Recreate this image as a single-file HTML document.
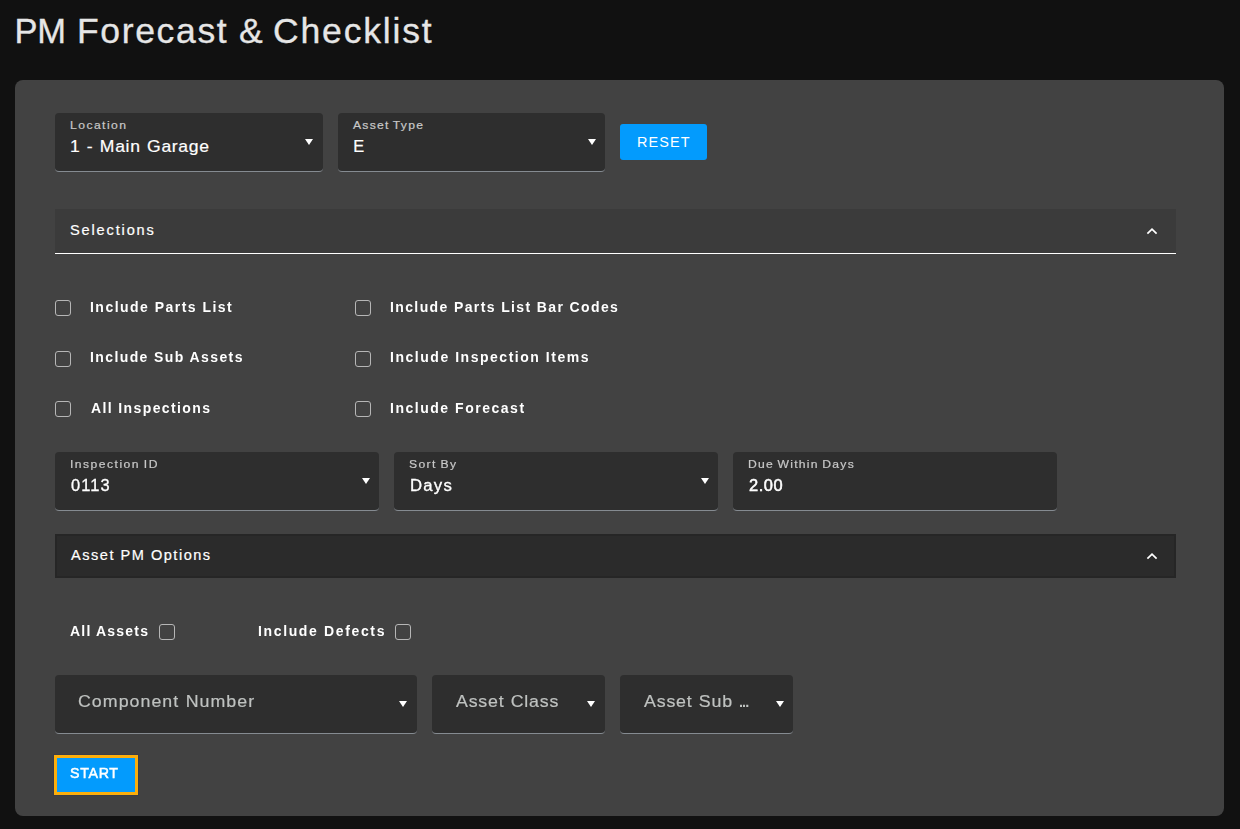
<!DOCTYPE html>
<html lang="en">
<head>
<meta charset="utf-8">
<title>PM Forecast &amp; Checklist</title>
<style>
*{box-sizing:border-box;margin:0;padding:0}
html,body{width:1240px;height:829px;overflow:hidden;background:#111111}
body{font-family:"Liberation Sans",sans-serif;color:#fff;position:relative}
.tx{position:absolute;display:inline-block;white-space:nowrap;line-height:1;transform-origin:0 50%}
h1{font-weight:400;font-size:34.5px}
.card{position:absolute;left:15px;top:80px;width:1209px;height:736px;background:#424242;border-radius:8px}
.field{position:absolute;height:59px;background:#2e2e2e;border-radius:4px;border-bottom:1px solid #858b91}
.arr{position:absolute;width:0;height:0;border-left:4.5px solid transparent;border-right:4.5px solid transparent;border-top:6.5px solid #fff}
.btn{position:absolute;background:#039bfd;border:0;font:inherit;color:#fff}
.sec{position:absolute;left:40px;width:1121px}
.chev{position:absolute}
.cb{position:absolute;width:16px;height:16px;border:1px solid #b6b6b6;border-radius:3px}
</style>
</head>
<body>
<h1><span class="tx" style="left:14.44px;top:13.70px;font-size:34.5px;color:#e6e6e6;letter-spacing:-0.27px;-webkit-text-stroke:0.3px #e6e6e6;">PM</span> <span class="tx" style="left:76.56px;top:13.70px;font-size:34.5px;color:#e6e6e6;letter-spacing:1.59px;transform:scaleX(1.03);-webkit-text-stroke:0.3px #e6e6e6;">Forecast</span> <span class="tx" style="left:238.83px;top:13.70px;font-size:34.5px;color:#e6e6e6;transform:scaleX(1.03);-webkit-text-stroke:0.3px #e6e6e6;">&amp;</span> <span class="tx" style="left:273.22px;top:13.70px;font-size:34.5px;color:#e6e6e6;letter-spacing:1.77px;transform:scaleX(1.03);-webkit-text-stroke:0.3px #e6e6e6;">Checklist</span></h1>
<main class="card">
<div class="field" style="left:40px;top:33px;width:268px"><span class="tx" style="left:15.13px;top:7.48px;font-size:11.25px;color:#c8c8c8;letter-spacing:1.33px;transform:scaleX(1.08);-webkit-text-stroke:0.2px #c8c8c8;">Location</span><span class="tx" style="left:14.57px;top:24.52px;font-size:16.4px;color:#ffffff;letter-spacing:0.65px;word-spacing:0.8px;transform:scaleX(1.07);-webkit-text-stroke:0.2px #ffffff;">1 - Main Garage</span><i class="arr" style="left:249.5px;top:25.7px"></i></div>
<div class="field" style="left:323px;top:33px;width:267px"><span class="tx" style="left:14.60px;top:7.48px;font-size:11.25px;color:#c8c8c8;letter-spacing:1.14px;word-spacing:-1.0px;transform:scaleX(1.08);-webkit-text-stroke:0.2px #c8c8c8;">Asset Type</span><span class="tx" style="left:15.19px;top:24.52px;font-size:16.4px;color:#ffffff;-webkit-text-stroke:0.2px #ffffff;">E</span><i class="arr" style="left:249.5px;top:25.7px"></i></div>
<button class="btn" style="left:605px;top:44px;width:87px;height:36px;border-radius:3px"><span class="tx" style="left:16.65px;top:11.25px;font-size:14.0px;color:#ffffff;letter-spacing:1.09px;transform:scaleX(1.03);">RESET</span></button>

<div class="sec" style="top:129px;height:45px;background:#3b3b3b;border-bottom:1px solid #fff"><span class="tx" style="left:15.42px;top:14.15px;font-size:14.0px;color:#ffffff;letter-spacing:1.78px;transform:scaleX(1.04);-webkit-text-stroke:0.2px #ffffff;">Selections</span><svg class="chev" style="left:1090px;top:17px" width="14" height="10" viewBox="0 0 14 10"><path d="M2.4 7.7 L7 3.1 L11.6 7.7" fill="none" stroke="#ffffff" stroke-width="1.7"/></svg></div>
<label><i class="cb" style="left:40px;top:220px"></i><span class="tx" style="left:75.26px;top:220.25px;font-size:14.0px;font-weight:700;color:#ffffff;letter-spacing:1.47px;will-change:transform;">Include Parts List</span></label>
<label><i class="cb" style="left:340px;top:220px"></i><span class="tx" style="left:375.26px;top:220.25px;font-size:14.0px;font-weight:700;color:#ffffff;letter-spacing:1.38px;will-change:transform;">Include Parts List Bar Codes</span></label>
<label><i class="cb" style="left:40px;top:271px"></i><span class="tx" style="left:75.26px;top:270.15px;font-size:14.0px;font-weight:700;color:#ffffff;letter-spacing:1.40px;will-change:transform;">Include Sub Assets</span></label>
<label><i class="cb" style="left:340px;top:271px"></i><span class="tx" style="left:375.26px;top:270.15px;font-size:14.0px;font-weight:700;color:#ffffff;letter-spacing:1.53px;will-change:transform;">Include Inspection Items</span></label>
<label><i class="cb" style="left:40px;top:321px"></i><span class="tx" style="left:75.82px;top:321.15px;font-size:14.0px;font-weight:700;color:#ffffff;letter-spacing:1.39px;will-change:transform;">All Inspections</span></label>
<label><i class="cb" style="left:340px;top:321px"></i><span class="tx" style="left:375.26px;top:321.15px;font-size:14.0px;font-weight:700;color:#ffffff;letter-spacing:1.52px;will-change:transform;">Include Forecast</span></label>

<div class="field" style="left:40px;top:372px;width:324px"><span class="tx" style="left:14.71px;top:7.48px;font-size:11.25px;color:#c8c8c8;letter-spacing:1.36px;word-spacing:-1.0px;transform:scaleX(1.08);-webkit-text-stroke:0.2px #c8c8c8;will-change:transform;">Inspection ID</span><span class="tx" style="left:16.11px;top:26.03px;font-size:15.8px;color:#ffffff;letter-spacing:1.04px;transform:scaleX(1.04);-webkit-text-stroke:0.3px #ffffff;will-change:transform;">0113</span><i class="arr" style="left:306.5px;top:25.8px"></i></div>
<div class="field" style="left:379px;top:372px;width:324px"><span class="tx" style="left:15.31px;top:7.48px;font-size:11.25px;color:#c8c8c8;letter-spacing:1.27px;word-spacing:-1.0px;transform:scaleX(1.08);-webkit-text-stroke:0.2px #c8c8c8;will-change:transform;">Sort By</span><span class="tx" style="left:15.86px;top:26.03px;font-size:15.8px;color:#ffffff;letter-spacing:1.16px;transform:scaleX(1.06);-webkit-text-stroke:0.3px #ffffff;will-change:transform;">Days</span><i class="arr" style="left:306.5px;top:25.8px"></i></div>
<div class="field" style="left:718px;top:372px;width:324px"><span class="tx" style="left:15.03px;top:7.48px;font-size:11.25px;color:#c8c8c8;letter-spacing:1.15px;word-spacing:-1.0px;transform:scaleX(1.08);-webkit-text-stroke:0.2px #c8c8c8;will-change:transform;">Due Within Days</span><span class="tx" style="left:15.58px;top:26.03px;font-size:15.8px;color:#ffffff;letter-spacing:0.56px;transform:scaleX(1.04);-webkit-text-stroke:0.5px #ffffff;will-change:transform;">2.00</span></div>

<div class="sec" style="top:454px;height:44px;background:#2b2b2b;border:2px solid #262626"><span class="tx" style="left:14.00px;top:12.15px;font-size:14.0px;color:#ffffff;letter-spacing:1.45px;transform:scaleX(1.04);-webkit-text-stroke:0.2px #ffffff;">Asset PM Options</span><svg class="chev" style="left:1088px;top:15px" width="14" height="10" viewBox="0 0 14 10"><path d="M2.4 7.7 L7 3.1 L11.6 7.7" fill="none" stroke="#ffffff" stroke-width="1.7"/></svg></div>
<label><span class="tx" style="left:54.92px;top:543.95px;font-size:14.0px;font-weight:700;color:#ffffff;letter-spacing:1.20px;will-change:transform;">All Assets</span><i class="cb" style="left:144px;top:544px"></i></label>
<label><span class="tx" style="left:242.56px;top:543.95px;font-size:14.0px;font-weight:700;color:#ffffff;letter-spacing:1.64px;will-change:transform;">Include Defects</span><i class="cb" style="left:380px;top:544px"></i></label>

<div class="field" style="left:40px;top:595px;width:362px"><span class="tx" style="left:23.11px;top:19.08px;font-size:16.8px;color:#bfc2c0;letter-spacing:0.97px;word-spacing:0.5px;transform:scaleX(1.06);-webkit-text-stroke:0.2px #bfc2c0;will-change:transform;">Component Number</span><i class="arr" style="left:343.5px;top:25.8px"></i></div>
<div class="field" style="left:417px;top:595px;width:173px"><span class="tx" style="left:23.60px;top:19.08px;font-size:16.8px;color:#bfc2c0;letter-spacing:0.75px;word-spacing:0.5px;transform:scaleX(1.06);-webkit-text-stroke:0.2px #bfc2c0;will-change:transform;">Asset Class</span><i class="arr" style="left:154.5px;top:25.8px"></i></div>
<div class="field" style="left:605px;top:595px;width:173px"><span class="tx" style="left:24.20px;top:19.08px;font-size:16.8px;color:#bfc2c0;letter-spacing:0.77px;word-spacing:0.5px;transform:scaleX(1.06);-webkit-text-stroke:0.2px #bfc2c0;will-change:transform;">Asset Sub</span><span class="tx" style="left:119.2px;top:20.0px;font-size:14.5px;font-weight:700;color:#bfc2c0;letter-spacing:-0.95px;will-change:transform">...</span><i class="arr" style="left:155.5px;top:25.8px"></i></div>

<button class="btn" style="left:39px;top:675px;width:84px;height:40px;border:3px solid #fcae0b;box-shadow:0 0 0 1px #3a3d48"><span class="tx" style="left:13.33px;top:8.18px;font-size:14.2px;color:#ffffff;letter-spacing:0.71px;-webkit-text-stroke:0.5px #ffffff;will-change:transform;">START</span></button>
</main>
</body>
</html>
